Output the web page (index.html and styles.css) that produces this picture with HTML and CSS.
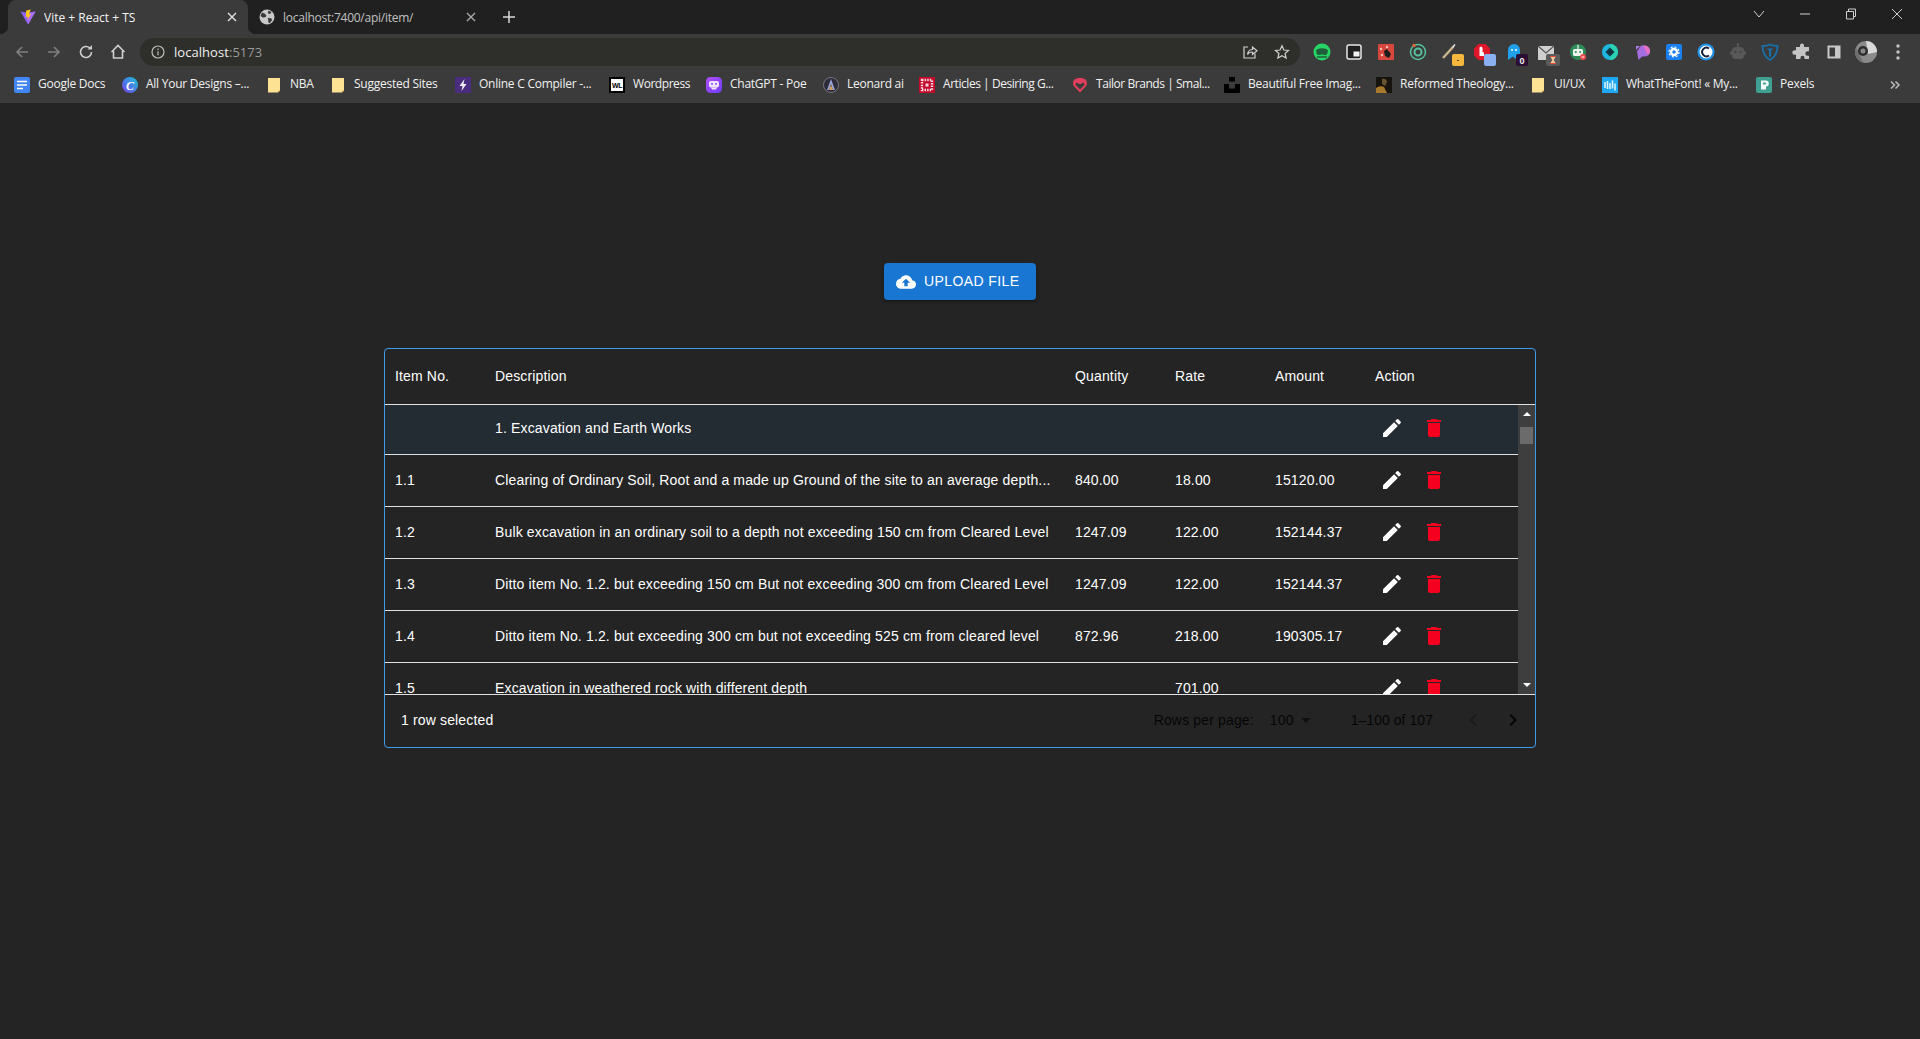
FILE: index.html
```html
<!DOCTYPE html>
<html lang="en">
<head>
<meta charset="utf-8">
<title>Vite + React + TS</title>
<link rel="stylesheet" href="styles.css">
</head>
<body>
<header class="chrome">
  <div class="tabstrip">
    <div class="tab tab-active">
      <svg class="fav" viewBox="0 0 16 16"><path d="M.5 2.500 8 15.500l7.500-13L8 4z" fill="#8f63ff"/><path d="M8 4 15.500 2.500 8 15.500z" fill="#b06cff"/><path d="M10.800.6 6.200 1.600l-.5 6.600 2-.4-.3 3.200 3.600-6.200-2 .4z" fill="#ffc517"/></svg>
      <span class="tab-title">Vite + React + TS</span>
      <svg class="tab-close" viewBox="0 0 10 10"><path d="M1 1l8 8M9 1l-8 8"/></svg>
    </div>
    <div class="tab tab-idle">
      <svg class="fav" viewBox="0 0 16 16"><circle cx="8" cy="8" r="7.500" fill="#c9c9c9"/><path d="M3 3.500l3 1.200 1.400 2-1 1.600-2.600.2L1.500 7zM9.500 1.500l3 1.500-1.400 2-2.200-.4zM8.800 9l3.400.2 1 1.800-2.400 3.200-1.400-.6-.2-2.400z" fill="#3a3a3a"/></svg>
      <span class="tab-title">localhost:7400/api/item/</span>
      <svg class="tab-close" viewBox="0 0 10 10"><path d="M1 1l8 8M9 1l-8 8"/></svg>
    </div>
    <svg class="new-tab" viewBox="0 0 12 12"><path d="M6 0v12M0 6h12"/></svg>
    <div class="win-controls">
      <svg class="win-btn win-chevron" viewBox="0 0 12 12"><path d="M1 3l5 6 5-6"/></svg>
      <svg class="win-btn win-min" viewBox="0 0 12 12"><path d="M1 6h10"/></svg>
      <svg class="win-btn win-restore" viewBox="0 0 12 12"><path d="M1.500 3.500h7v7.500h-7zM3.500 3.500V1h7v7.500H8.500"/></svg>
      <svg class="win-btn win-close" viewBox="0 0 12 12"><path d="M1 1l10 10M11 1L1 11"/></svg>
    </div>
  </div>

  <div class="toolbar">
    <button class="tool dim"><svg viewBox="0 0 16 16"><path d="M14 8H3M8 3 3 8l5 5"/></svg></button>
    <button class="tool dim"><svg viewBox="0 0 16 16"><path d="M2 8h11M8 3l5 5-5 5"/></svg></button>
    <button class="tool"><svg viewBox="0 0 16 16"><path d="M13.500 8A5.500 5.500 0 1 1 11.800 4"/><path class="solid" d="M9.500 5.500H14V1z"/></svg></button>
    <button class="tool"><svg viewBox="0 0 16 16"><path d="M1.500 8 8 1.500 14.500 8M3.500 7v7h9V7"/></svg></button>
    <div class="omnibox">
      <svg class="info" viewBox="0 0 14 14"><circle cx="7" cy="7" r="6"/><path d="M7 6.200v4M7 3.500v1.500"/></svg>
      <span class="url">localhost<span class="url-port">:5173</span></span>
      <span class="omni-spacer"></span>
      <button class="tool omni-tool"><svg viewBox="0 0 16 16"><path d="M6 3H2v11h11V9.500"/><path d="M5.500 10.500C6 7 8.500 5.500 10.500 5.500V3L15 6.800l-4.500 3.700V8C8.500 8 6.500 8.800 5.500 10.500z"/></svg></button>
      <button class="tool omni-tool"><svg viewBox="0 0 16 16"><path d="M8 1.800 9.900 6l4.600.5-3.400 3 1 4.500L8 11.700 3.900 14l1-4.500-3.400-3L6.100 6z"/></svg></button>
    </div>
    <div class="ext"><svg viewBox="0 0 24 24"><circle cx="12" cy="12" r="8.500" fill="#27d466"/><path d="M6 10.500c2-3 10-3 12 0l-.8 3.500c-1.500 2-3 .6-5.200.6s-3.700 1.400-5.200-.6z" fill="#1f5e3a"/><path d="M7 17h10" stroke="#1f5e3a" stroke-width="1.500"/></svg></div>
    <div class="ext"><svg viewBox="0 0 24 24"><rect x="5" y="5" width="14" height="14" rx="2" fill="#1f1f1f" stroke="#e8e8e8" stroke-width="1.500"/><rect x="11.500" y="11.500" width="6" height="5" fill="#f2f2f2"/></svg></div>
    <div class="ext"><svg viewBox="0 0 24 24"><rect x="4" y="4" width="16" height="16" rx="1" fill="#d8463c"/><path d="M10 11l3-2 4 5-2 4-4-2z" fill="#1c1c1c"/><circle cx="7" cy="9" r="1.200" fill="#f5c4bd"/><circle cx="13" cy="7" r="1.200" fill="#f5c4bd"/><circle cx="8" cy="15" r="1.200" fill="#f5c4bd"/></svg></div>
    <div class="ext"><svg viewBox="0 0 24 24"><circle cx="12" cy="12" r="7.500" fill="none" stroke="#55c09a" stroke-width="1.500"/><circle cx="12" cy="12" r="3.500" fill="none" stroke="#55c09a" stroke-width="2"/><circle cx="8" cy="5.500" r="1.800" fill="#d9673a"/></svg></div>
    <div class="ext"><svg viewBox="0 0 24 24"><path d="M5 18 15 7" stroke="#c9b48e" stroke-width="2.500"/><path d="M14.500 7.500 17 4.500" stroke="#e8e8e8" stroke-width="1.500"/><rect x="14" y="14" width="12" height="12" rx="2" fill="#f5b83d"/><rect x="19" y="20" width="2" height="1" fill="#5a4010"/></svg></div>
    <div class="ext"><svg viewBox="0 0 24 24"><path d="M8.500 4h7L20 8.500v7L15.500 20h-7L4 15.500v-7z" fill="#e0162b"/><path d="M9.500 16V8c0-1.600 3-1.600 3 0v4l1.500.5V16z" fill="#fff"/><rect x="14" y="14" width="12" height="12" rx="2" fill="#8ab0f0"/></svg></div>
    <div class="ext"><svg viewBox="0 0 24 24"><path d="M6 20V10a6 6 0 0 1 12 0v8l-2-2-2.500 3-2.500-2.500z" fill="#1ea0ea"/><circle cx="10" cy="10" r="1" fill="#fff"/><circle cx="14" cy="10" r="1" fill="#fff"/><rect x="14" y="14" width="12" height="12" rx="2" fill="#2a0f33"/><text class="badge-text" x="20" y="23.500">0</text></svg></div>
    <div class="ext"><svg viewBox="0 0 24 24"><rect x="4" y="6" width="16" height="14" fill="#cfcfcf"/><path d="M4 6l8 7 8-7" fill="none" stroke="#555" stroke-width="1.200"/><rect x="12" y="14" width="14" height="12" rx="2" fill="#5a5a5a"/><path d="M16 16h6l-2.300 4 2.300 4h-6l2.300-4z" fill="#f3c9a0"/><path d="M16 16h6v1h-6zM16 23h6v1h-6z" fill="#e04d3a"/></svg></div>
    <div class="ext"><svg viewBox="0 0 24 24"><circle cx="12" cy="12" r="8" fill="#2e8b57"/><rect x="7" y="9" width="10" height="7" rx="1.500" fill="#eef5ef"/><circle cx="9.800" cy="12" r="1" fill="#2e8b57"/><circle cx="14.200" cy="12" r="1" fill="#2e8b57"/><path d="M12 9V5" stroke="#eef5ef" stroke-width="1.200"/><circle cx="17" cy="17" r="3" fill="#f04a4a"/><path d="M15.700 17h2.600" stroke="#fff"/></svg></div>
    <div class="ext"><svg viewBox="0 0 24 24"><circle cx="12" cy="12" r="8" fill="#1eb6de"/><path d="M12 4a8 8 0 0 1 0 16z" fill="#2bd1b3"/><path d="M12 7.500 16.500 12 12 16.500 7.500 12z" fill="#12343f"/></svg></div>
    <div class="ext"><svg viewBox="0 0 24 24"><path d="M7 11.500 11 5.500h3.500a5.500 5.500 0 0 1 0 11H12L8.500 20z" fill="#a56de0"/><path d="M13 5.500h1.500a5.500 5.500 0 0 1 3.500 9.700z" fill="#e86fc0"/><path d="M6 6h4L6 10z" fill="#b07be6"/></svg></div>
    <div class="ext"><svg viewBox="0 0 24 24"><rect x="4" y="4" width="16" height="16" rx="2" fill="#1a7ff0"/><circle cx="12" cy="12" r="3" fill="none" stroke="#fff" stroke-width="2.500"/><circle cx="12" cy="12" r="5" fill="none" stroke="#fff" stroke-width="1.200" stroke-dasharray="2 1.900"/></svg></div>
    <div class="ext"><svg viewBox="0 0 24 24"><circle cx="12" cy="12" r="8" fill="#fff"/><circle cx="12" cy="12" r="7.500" fill="none" stroke="#1c90e8" stroke-width="2"/><path d="M15 8.500a4.300 4.300 0 1 0 0 7" fill="none" stroke="#15233a" stroke-width="2"/></svg></div>
    <div class="ext"><svg viewBox="0 0 24 24"><path d="M12 4v3" stroke="#585858" stroke-width="1.500"/><circle cx="12" cy="4.500" r="1.300" fill="#585858"/><rect x="6" y="7" width="12" height="12" rx="3.500" fill="#585858"/><rect x="4" y="11" width="16" height="4" rx="1.500" fill="#585858"/><circle cx="9.500" cy="12" r="1" fill="#3b3b3b"/><circle cx="14.500" cy="12" r="1" fill="#3b3b3b"/></svg></div>
    <div class="ext"><svg viewBox="0 0 24 24"><path d="M12 4.500c2.500 1.300 5 1.500 7.500 1.500 0 6-1.500 10.500-7.500 14C6 16.500 4.500 12 4.500 6c2.500 0 5-.2 7.500-1.500z" fill="none" stroke="#1a6fa8" stroke-width="1.800"/><path d="M8.500 8.500h7l-2.400 2v5.500L12 17l-1-1v-5.500z" fill="#1a6fa8"/></svg></div>
    <div class="ext"><svg viewBox="0 0 24 24"><path d="M10 5.500a2 2 0 0 1 4 0V7h5v4.300h-1.500a2.200 2.200 0 0 0 0 4.400H19V19h-4.500v-1.300a2 2 0 0 0-4 0V19H6v-4.300H4.500a2.200 2.200 0 0 1 0-4.400H6V7h4z" fill="#c4c4c4"/></svg></div>
    <div class="ext"><svg viewBox="0 0 24 24"><rect x="5.500" y="5.500" width="13" height="13" fill="#c8c8c8"/><rect x="7.500" y="7.500" width="5.500" height="9" fill="#3b3b3b"/></svg></div>
    <div class="ext"><svg viewBox="0 0 24 24"><circle cx="12" cy="12" r="11" fill="#8b8b8b"/><path d="M12 1A11 11 0 0 1 23 12L14 14z" fill="#d9d9d9"/><path d="M2 8l7 14a11 11 0 0 1-8-10z" fill="#6e6e6e"/><circle cx="9" cy="11" r="5" fill="#2e2e2e"/><circle cx="9" cy="11" r="2.500" fill="#8a8a8a"/></svg></div>
    <div class="ext"><svg viewBox="0 0 24 24"><circle cx="12" cy="6" r="1.700" fill="#c4c4c4"/><circle cx="12" cy="12" r="1.700" fill="#c4c4c4"/><circle cx="12" cy="18" r="1.700" fill="#c4c4c4"/></svg></div>
  </div>

  <nav class="bookmarks">
    <a class="bm"><svg class="fav" viewBox="0 0 16 16"><rect x="0" y="0" width="16" height="16" rx="2" fill="#4285f4"/><path d="M3 4.500h10M3 8h10M3 11.500h6" stroke="#fff" stroke-width="1.600"/></svg><span>Google Docs</span></a>
    <a class="bm"><svg class="fav" viewBox="0 0 16 16"><defs><linearGradient id="cv" x1="0" y1="1" x2="1" y2="0"><stop offset="0" stop-color="#7a3cf0"/><stop offset="1" stop-color="#12c6d8"/></linearGradient></defs><circle cx="8" cy="8" r="8" fill="url(#cv)"/><text class="fav-c" x="8" y="12.500">C</text></svg><span>All Your Designs –...</span></a>
    <a class="bm"><svg class="fav" viewBox="0 0 16 16"><path class="folder" d="M2 1h12v12.500L12 15.500H2z"/><path d="M14 13.500h-2v2z" fill="#c9a94e"/></svg><span>NBA</span></a>
    <a class="bm"><svg class="fav" viewBox="0 0 16 16"><path class="folder" d="M2 1h12v12.500L12 15.500H2z"/><path d="M14 13.500h-2v2z" fill="#c9a94e"/></svg><span>Suggested Sites</span></a>
    <a class="bm"><svg class="fav" viewBox="0 0 16 16"><rect width="16" height="16" fill="#4b2d7f"/><path d="M9.500 2 4.500 9h3l-1 5 5-7h-3z" fill="#eee"/></svg><span>Online C Compiler -...</span></a>
    <a class="bm bm-narrow"><svg class="fav" viewBox="0 0 16 16"><rect width="16" height="16" fill="#000"/><rect x="2" y="2" width="12" height="12" fill="#fff"/><text class="fav-wl" x="8" y="10.800">WL</text></svg><span>Wordpress</span></a>
    <a class="bm"><svg class="fav" viewBox="0 0 16 16"><defs><linearGradient id="poe" x1="0" y1="0" x2="1" y2="1"><stop offset="0" stop-color="#b44cff"/><stop offset="1" stop-color="#6d3df5"/></linearGradient></defs><rect width="16" height="16" rx="4.500" fill="url(#poe)"/><rect x="3" y="4" width="10" height="6.500" rx="2" fill="#efe2ff"/><path d="M5 10.500h6l-1 2H6z" fill="#efe2ff"/><rect x="5.200" y="6" width="1.600" height="1.800" fill="#8d45f5"/><rect x="9.200" y="6" width="1.600" height="1.800" fill="#8d45f5"/></svg><span>ChatGPT - Poe</span></a>
    <a class="bm"><svg class="fav" viewBox="0 0 16 16"><circle cx="8" cy="8" r="7.500" fill="#2b2b3a" stroke="#77757f"/><path d="M8 2 4 13h2l2-6 2 6h2z" fill="#9ca5d6"/><path d="M6 13h4l-2-5z" fill="#d9a05c"/></svg><span>Leonard ai</span></a>
    <a class="bm bm-narrow"><svg class="fav" viewBox="0 0 16 16"><rect width="16" height="16" fill="#c3092c"/><rect x="3" y="3" width="10" height="10" fill="none" stroke="#f8d9df" stroke-width="2.400" stroke-dasharray="1.500 1.100"/><rect x="6.500" y="6.500" width="3" height="3" fill="#f8d9df"/></svg><span>Articles | Desiring G...</span></a>
    <a class="bm bm-narrow"><svg class="fav" viewBox="0 0 16 16"><path d="M8 15.500 1.800 9C.5 7 1 3.500 2.500 2.500 4 1 6 1 8 1s4 0 5.500 1.500C15 3.500 15.500 7 14.200 9z" fill="#e0405e"/><path d="M8 12.500 4 8.300c-1-1.400.1-2.800 1.300-2.800l1.200 1.500h3l1.200-1.500c1.200 0 2.300 1.400 1.300 2.800z" fill="#3b3b3b"/></svg><span>Tailor Brands | Smal...</span></a>
    <a class="bm"><svg class="fav" viewBox="0 0 16 16"><path d="M5 0h6v4.500H5zM0 7h5v4.500h6V7h5v9H0z" fill="#000"/></svg><span>Beautiful Free Imag...</span></a>
    <a class="bm"><svg class="fav" viewBox="0 0 16 16"><rect width="16" height="16" fill="#17130d"/><path d="M0 16V11c3-2 6-2 8-1l3 6z" fill="#a77a2c"/><path d="M6 2c3-1 5 1 5 3l-2 4-3-2z" fill="#6b5232"/></svg><span>Reformed Theology...</span></a>
    <a class="bm"><svg class="fav" viewBox="0 0 16 16"><path class="folder" d="M2 1h12v12.500L12 15.500H2z"/><path d="M14 13.500h-2v2z" fill="#c9a94e"/></svg><span>UI/UX</span></a>
    <a class="bm"><svg class="fav" viewBox="0 0 16 16"><rect width="16" height="16" fill="#1ea7f2"/><path d="M3 5v6M5.500 4v8M8 6v6M10.500 3.500v8M13 6.500v7" stroke="#d8f1ff" stroke-width="1.600"/></svg><span>WhatTheFont! « My...</span></a>
    <a class="bm"><svg class="fav" viewBox="0 0 16 16"><rect width="16" height="16" rx="2" fill="#3f9f91"/><path d="M5 3.500h4.500a3 3 0 0 1 .5 6V12.500H5z" fill="#f4fbfa"/><path d="M7 5.500h2a1 1 0 0 1 0 2H7z" fill="#3f9f91"/></svg><span>Pexels</span></a>
    <svg class="bm-more" viewBox="0 0 10 10"><path d="M1 1.500 4.500 5 1 8.500M5.500 1.500 9 5 5.500 8.500"/></svg>
  </nav>
</header>

<main class="page">
  <button class="upload">
    <svg class="upload-icon" viewBox="0 0 24 24"><path d="M19.350 10.040C18.670 6.590 15.640 4 12 4 9.110 4 6.600 5.640 5.350 8.040 2.340 8.360 0 10.910 0 14c0 3.310 2.690 6 6 6h13c2.760 0 5-2.240 5-5 0-2.640-2.050-4.780-4.650-4.960zM14 13v4h-4v-4H7l5-5 5 5h-3z"/></svg>
    <span class="upload-label">UPLOAD FILE</span>
  </button>

  <section class="card">
    <div class="row-grid head">
      <div class="cell">Item No.</div>
      <div class="cell">Description</div>
      <div class="cell">Quantity</div>
      <div class="cell">Rate</div>
      <div class="cell">Amount</div>
      <div class="cell">Action</div>
    </div>
    <div class="body">
      <div class="rows">
        <div class="rows-inner">
          <div class="row-grid row selected">
            <div class="cell"></div>
            <div class="cell">1. Excavation and Earth Works</div>
            <div class="cell"></div><div class="cell"></div><div class="cell"></div>
            <div class="cell actions">
              <svg class="act" viewBox="0 0 24 24"><path d="M3 17.250V21h3.750L17.810 9.940l-3.750-3.750L3 17.250zM20.710 7.040c.39-.39.39-1.020 0-1.410l-2.340-2.340a.9959.9959 0 0 0-1.410 0l-1.830 1.830 3.750 3.750 1.830-1.830z"/></svg>
              <svg class="act act-del" viewBox="0 0 24 24"><path d="M6 19c0 1.100.9 2 2 2h8c1.100 0 2-.9 2-2V7H6v12zM19 4h-3.500l-1-1h-5l-1 1H5v2h14V4z"/></svg>
            </div>
          </div>
          <div class="row-grid row">
            <div class="cell">1.1</div>
            <div class="cell">Clearing of Ordinary Soil, Root and a made up Ground of the site to an average depth...</div>
            <div class="cell">840.00</div><div class="cell">18.00</div><div class="cell">15120.00</div>
            <div class="cell actions">
              <svg class="act" viewBox="0 0 24 24"><path d="M3 17.250V21h3.750L17.810 9.940l-3.750-3.750L3 17.250zM20.710 7.040c.39-.39.39-1.020 0-1.410l-2.340-2.340a.9959.9959 0 0 0-1.410 0l-1.830 1.830 3.750 3.750 1.830-1.830z"/></svg>
              <svg class="act act-del" viewBox="0 0 24 24"><path d="M6 19c0 1.100.9 2 2 2h8c1.100 0 2-.9 2-2V7H6v12zM19 4h-3.500l-1-1h-5l-1 1H5v2h14V4z"/></svg>
            </div>
          </div>
          <div class="row-grid row">
            <div class="cell">1.2</div>
            <div class="cell">Bulk excavation in an ordinary soil to a depth not exceeding 150 cm from Cleared Level</div>
            <div class="cell">1247.09</div><div class="cell">122.00</div><div class="cell">152144.37</div>
            <div class="cell actions">
              <svg class="act" viewBox="0 0 24 24"><path d="M3 17.250V21h3.750L17.810 9.940l-3.750-3.750L3 17.250zM20.710 7.040c.39-.39.39-1.020 0-1.410l-2.340-2.340a.9959.9959 0 0 0-1.410 0l-1.830 1.830 3.750 3.750 1.830-1.830z"/></svg>
              <svg class="act act-del" viewBox="0 0 24 24"><path d="M6 19c0 1.100.9 2 2 2h8c1.100 0 2-.9 2-2V7H6v12zM19 4h-3.500l-1-1h-5l-1 1H5v2h14V4z"/></svg>
            </div>
          </div>
          <div class="row-grid row">
            <div class="cell">1.3</div>
            <div class="cell">Ditto item No. 1.2. but exceeding 150 cm But not exceeding 300 cm from Cleared Level</div>
            <div class="cell">1247.09</div><div class="cell">122.00</div><div class="cell">152144.37</div>
            <div class="cell actions">
              <svg class="act" viewBox="0 0 24 24"><path d="M3 17.250V21h3.750L17.810 9.940l-3.750-3.750L3 17.250zM20.710 7.040c.39-.39.39-1.020 0-1.410l-2.340-2.340a.9959.9959 0 0 0-1.410 0l-1.830 1.830 3.750 3.750 1.830-1.830z"/></svg>
              <svg class="act act-del" viewBox="0 0 24 24"><path d="M6 19c0 1.100.9 2 2 2h8c1.100 0 2-.9 2-2V7H6v12zM19 4h-3.500l-1-1h-5l-1 1H5v2h14V4z"/></svg>
            </div>
          </div>
          <div class="row-grid row">
            <div class="cell">1.4</div>
            <div class="cell">Ditto item No. 1.2. but exceeding 300 cm but not exceeding 525 cm from cleared level</div>
            <div class="cell">872.96</div><div class="cell">218.00</div><div class="cell">190305.17</div>
            <div class="cell actions">
              <svg class="act" viewBox="0 0 24 24"><path d="M3 17.250V21h3.750L17.810 9.940l-3.750-3.750L3 17.250zM20.710 7.040c.39-.39.39-1.020 0-1.410l-2.340-2.340a.9959.9959 0 0 0-1.410 0l-1.830 1.830 3.750 3.750 1.830-1.830z"/></svg>
              <svg class="act act-del" viewBox="0 0 24 24"><path d="M6 19c0 1.100.9 2 2 2h8c1.100 0 2-.9 2-2V7H6v12zM19 4h-3.500l-1-1h-5l-1 1H5v2h14V4z"/></svg>
            </div>
          </div>
          <div class="row-grid row">
            <div class="cell">1.5</div>
            <div class="cell">Excavation in weathered rock with different depth</div>
            <div class="cell"></div><div class="cell">701.00</div><div class="cell"></div>
            <div class="cell actions">
              <svg class="act" viewBox="0 0 24 24"><path d="M3 17.250V21h3.750L17.810 9.940l-3.750-3.750L3 17.250zM20.710 7.040c.39-.39.39-1.020 0-1.410l-2.340-2.340a.9959.9959 0 0 0-1.410 0l-1.830 1.830 3.750 3.750 1.830-1.830z"/></svg>
              <svg class="act act-del" viewBox="0 0 24 24"><path d="M6 19c0 1.100.9 2 2 2h8c1.100 0 2-.9 2-2V7H6v12zM19 4h-3.500l-1-1h-5l-1 1H5v2h14V4z"/></svg>
            </div>
          </div>
        </div>
      </div>
      <div class="scrollbar">
        <span class="sb-arrow sb-up"></span>
        <span class="sb-thumb"></span>
        <span class="sb-fill"></span>
        <span class="sb-arrow sb-down"></span>
      </div>
    </div>
    <footer class="foot">
      <span class="selected-count">1 row selected</span>
      <div class="pager">
        <span class="rpp">Rows per page:</span>
        <span class="rpp-value">100</span>
        <svg class="rpp-arrow" viewBox="0 0 24 24"><path d="M7 10l5 5 5-5z"/></svg>
        <span class="range">1–100 of 107</span>
        <svg class="page-btn page-off" viewBox="0 0 24 24"><path d="M15.410 7.410 14 6l-6 6 6 6 1.410-1.410L10.830 12z"/></svg>
        <svg class="page-btn" viewBox="0 0 24 24"><path d="M10 6 8.590 7.410 13.170 12l-4.580 4.590L10 18l6-6z"/></svg>
      </div>
    </footer>
  </section>
</main>
</body>
</html>
```

FILE: styles.css
```css
* { box-sizing: border-box; }
html, body { margin: 0; height: 100%; overflow: hidden; }
body {
  background: #242424;
  color: #fff;
  font-family: "Liberation Sans", Arial, sans-serif;
  font-size: 14px;
  display: flex;
  flex-direction: column;
}

/* ---------- browser chrome ---------- */
.chrome { font-family: "Open Sans", "Noto Sans", sans-serif; font-size: 12px; flex: none; }

.tabstrip {
  height: 34px;
  background: #202020;
  display: flex;
  align-items: stretch;
  padding-left: 8px;
}
.tab {
  width: 240px;
  height: 34px;
  display: flex;
  align-items: center;
  padding: 0 10px 0 12px;
  border-radius: 8px 8px 0 0;
  position: relative;
}
.tab-active { background: #3b3b3b; color: #f4f4f4; }
.tab-active::before,
.tab-active::after {
  content: "";
  position: absolute;
  bottom: 0;
  width: 8px;
  height: 8px;
}
.tab-active::before { left: -8px; background: radial-gradient(circle at 0 0, transparent 8px, #3b3b3b 8.5px); }
.tab-active::after { right: -8px; background: radial-gradient(circle at 100% 0, transparent 8px, #3b3b3b 8.5px); }
.tab-idle { margin-left: -2px; color: #c0c0c0; letter-spacing: -0.25px; }
.tab-title { flex: 1; margin-left: 8px; white-space: nowrap; overflow: hidden; }
.fav { width: 16px; height: 16px; flex: none; display: block; }
.tab-close { width: 10px; height: 10px; flex: none; margin-right: 1px; fill: none; stroke: #e4e4e4; stroke-width: 1.4; }
.tab-idle .tab-close { stroke: #a8a8a8; margin-right: 0; }
.tab-idle .fav { margin-left: 1px; }
.new-tab { width: 12px; height: 12px; margin: 11px 0 0 17px; fill: none; stroke: #d8d8d8; stroke-width: 1.500; }
.win-controls { margin-left: auto; display: flex; align-items: flex-start; }
.win-btn { width: 12px; height: 12px; margin-top: 8px; fill: none; stroke: #d0d0d0; stroke-width: 1; }
.win-chevron { margin-right: 34px; }
.win-min { margin-right: 34px; }
.win-restore { margin-right: 34px; }
.win-close { margin-right: 17px; }

.toolbar {
  height: 32px;
  background: #3b3b3b;
  display: flex;
  align-items: flex-start;
  padding: 4px 6px 0;
}
.tool {
  width: 32px;
  height: 28px;
  padding: 0;
  border: 0;
  background: none;
  display: flex;
  align-items: center;
  justify-content: center;
  flex: none;
}
.tool svg { width: 16px; height: 16px; fill: none; stroke: #cfcfcf; stroke-width: 1.600; }
.tool .solid { fill: #cfcfcf; stroke: none; }
.tool.dim svg { stroke: #808080; }
.omnibox {
  flex: 1;
  height: 28px;
  margin: 0 6px;
  background: #2e2e2a;
  border-radius: 14px;
  display: flex;
  align-items: center;
  padding: 0 2px 0 11px;
}
.info { width: 14px; height: 14px; flex: none; fill: none; stroke: #bdbdbd; stroke-width: 1.200; }
.url { margin-left: 9px; font-size: 13px; color: #efefef; letter-spacing: 0.05px; white-space: nowrap; }
.url-port { color: #9a9a9a; }
.omni-spacer { flex: 1; }
.omni-tool svg { stroke-width: 1.200; }
.ext {
  width: 32px;
  height: 28px;
  flex: none;
  display: flex;
  align-items: center;
  justify-content: center;
}
.ext svg { width: 24px; height: 24px; overflow: visible; }
.badge-text { font: 700 9px "Liberation Sans", sans-serif; fill: #eee; text-anchor: middle; }

.bookmarks {
  height: 37px;
  background: #3b3b3b;
  display: grid;
  grid-template-columns: 108px 144px 64px 125px 154px 97px 117px 96px 153px 152px 152px 154px 72px 154px 134px 1fr;
  align-items: center;
  padding-left: 14px;
  color: #f1f1f1;
  white-space: nowrap;
}
.bm { display: flex; align-items: center; gap: 8px; letter-spacing: -0.25px; overflow: hidden; }
.bm-narrow { letter-spacing: -0.45px; }
.bm span { position: relative; top: -1px; }
.bm-more { width: 10px; height: 10px; fill: none; stroke: #bdbdbd; stroke-width: 1.500; }
.folder { fill: #fde293; }
.fav-c { font: italic 700 12px "Liberation Serif", serif; fill: #fff; text-anchor: middle; }
.fav-wl { font: 700 7px "Liberation Sans", sans-serif; fill: #000; text-anchor: middle; letter-spacing: -0.5px; }

/* ---------- page ---------- */
.page {
  flex: 1;
  display: flex;
  flex-direction: column;
  align-items: center;
  padding-top: 160px;
}
.upload {
  width: 152px;
  height: 37px;
  padding: 0 0 0 12px;
  border: 0;
  border-radius: 4px;
  background: #1976d2;
  color: #fff;
  font: 500 14px "Liberation Sans", Arial, sans-serif;
  letter-spacing: 0.4px;
  display: flex;
  align-items: center;
  justify-content: flex-start;
  gap: 8px;
  box-shadow: 0 3px 1px -2px rgba(0,0,0,.2), 0 2px 2px 0 rgba(0,0,0,.14), 0 1px 5px 0 rgba(0,0,0,.12);
  white-space: nowrap;
}
.upload-label { padding-bottom: 2px; }
.upload-icon { width: 20px; height: 20px; fill: #fff; flex: none; }

.card {
  width: 1152px;
  height: 400px;
  margin-top: 48px;
  border: 1px solid #3f9ae8;
  border-radius: 4px;
  display: flex;
  flex-direction: column;
  overflow: hidden;
  letter-spacing: 0.15px;
}
.row-grid {
  display: grid;
  grid-template-columns: 100px 580px 100px 100px 100px 100px;
  align-items: center;
}
.cell {
  padding: 0 10px 2px;
  white-space: nowrap;
  overflow: hidden;
  text-overflow: ellipsis;
  min-width: 0;
}
.head { height: 56px; border-bottom: 1px solid #e0e0e0; flex: none; }
.body { height: 289px; flex: none; display: flex; }
.rows { flex: 1; overflow: hidden; min-width: 0; }
.rows-inner { margin-top: -2px; }
.row { height: 52px; border-bottom: 1px solid #e0e0e0; }
.selected { background: #232b33; }
.actions { display: flex; align-items: center; gap: 18px; padding: 0 0 1px 15px; overflow: visible; }
.act { width: 24px; height: 24px; fill: #fff; flex: none; }
.act-del { fill: #f5001e; }

.scrollbar {
  width: 17px;
  flex: none;
  background: #3e3e3e;
  display: flex;
  flex-direction: column;
  align-items: center;
}
.sb-arrow {
  width: 0;
  height: 0;
  flex: none;
  border-left: 4px solid transparent;
  border-right: 4px solid transparent;
}
.sb-up { margin-top: 7px; border-bottom: 4px solid #fff; }
.sb-down { margin-bottom: 7px; border-top: 4px solid #fff; }
.sb-thumb { width: 13px; height: 17px; margin-top: 11px; background: #6b6b6b; flex: none; }
.sb-fill { flex: 1; }

.foot {
  height: 53px;
  flex: none;
  border-top: 1px solid #e0e0e0;
  display: flex;
  align-items: center;
  padding: 0 0 3px 16px;
}
.pager {
  margin-left: auto;
  display: flex;
  align-items: center;
  color: rgba(0,0,0,.87);
  padding-right: 10px;
}
.rpp-value { margin-left: 16px; }
.rpp-arrow { width: 24px; height: 24px; fill: rgba(0,0,0,.54); }
.range { margin-left: 33px; letter-spacing: 0.05px; }
.page-btn { width: 24px; height: 24px; fill: rgba(0,0,0,.87); }
.page-off { fill: rgba(0,0,0,.26); margin: 0 16px 0 28px; }
```
